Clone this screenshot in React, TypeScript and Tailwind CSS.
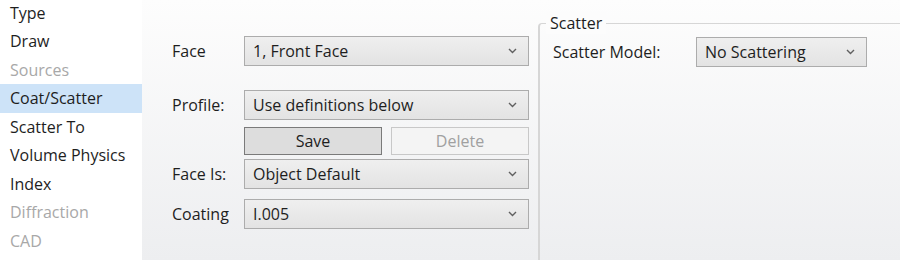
import React from 'react'

const navItems = [
  { label: 'Type', disabled: false },
  { label: 'Draw', disabled: false },
  { label: 'Sources', disabled: true },
  { label: 'Coat/Scatter', disabled: false, active: true },
  { label: 'Scatter To', disabled: false },
  { label: 'Volume Physics', disabled: false },
  { label: 'Index', disabled: false },
  { label: 'Diffraction', disabled: true },
  { label: 'CAD', disabled: true },
]

function Chevron() {
  return (
    <svg width="9" height="6" viewBox="0 0 9 6" className="shrink-0">
      <path d="M1 1l3.5 3.5L8 1" fill="none" stroke="#606060" strokeWidth={1.4} />
    </svg>
  )
}

function Select({ value, className }: { value: string; className: string }) {
  return (
    <div
      className={`flex h-[30px] items-center justify-between border border-[#acacac] bg-gradient-to-b from-[#efefef] to-[#e3e3e3] pl-[8px] pr-[11px] text-[#1e1e1e] ${className}`}
    >
      <span>{value}</span>
      <Chevron />
    </div>
  )
}

function Row({ label, children }: { label: string; children: React.ReactNode }) {
  return (
    <div className="flex items-center">
      <div className="w-[72px] text-[#1e1e1e]">{label}</div>
      {children}
    </div>
  )
}

export default function App() {
  return (
    <div
      className="flex h-[260px] w-[900px] overflow-hidden bg-white text-[16px]"
      style={{ fontFamily: '"Segoe UI", "Open Sans", "Noto Sans", sans-serif' }}
    >
      {/* Left nav */}
      <div className="mt-[-1.5px] w-[142px] shrink-0">
        {navItems.map((item) => (
          <div
            key={item.label}
            className={`flex h-[28.5px] items-center pl-[10px] ${
              item.active ? 'bg-[#cde3f8]' : ''
            } ${item.disabled ? 'text-[#a8a8a8]' : 'text-[#1e1e1e]'}`}
          >
            {item.label}
          </div>
        ))}
      </div>

      {/* Content panel */}
      <div className="flex flex-1 bg-gradient-to-b from-[#fdfdfd] to-[#edeef0]">
        <div className="flex w-[396px] shrink-0 flex-col pl-[30px] pt-[36px]">
          <Row label="Face">
            <Select value="1, Front Face" className="w-[285px]" />
          </Row>
          <div className="mt-[24px]">
            <Row label="Profile:">
              <Select value="Use definitions below" className="w-[285px]" />
            </Row>
          </div>
          <div className="ml-[72px] mt-[7px] flex gap-[9px]">
            <button className="h-[28px] w-[138px] border border-[#7a7a7a] bg-[#dddddd] text-[#1e1e1e]">
              Save
            </button>
            <button className="h-[28px] w-[138px] border border-[#c8c8c8] bg-[#f4f4f4] text-[#a0a0a0]">
              Delete
            </button>
          </div>
          <div className="mt-[4px]">
            <Row label="Face Is:">
              <Select value="Object Default" className="w-[285px]" />
            </Row>
          </div>
          <div className="mt-[10px]">
            <Row label="Coating">
              <Select value="I.005" className="w-[285px]" />
            </Row>
          </div>
        </div>

        {/* Scatter group */}
        <div className="relative mt-[23px] flex-1 rounded-tl-[4px] border-l-2 border-t border-[#d6d6d6] pl-[13px] pt-[13px]">
          <div className="absolute left-[6px] top-[-12px] bg-[#fcfcfc] px-[4px] leading-[22px] text-[#1e1e1e]">
            Scatter
          </div>
          <div className="flex items-center">
            <div className="w-[143px] text-[#1e1e1e]">Scatter Model:</div>
            <Select value="No Scattering" className="w-[171px]" />
          </div>
        </div>
      </div>
    </div>
  )
}
